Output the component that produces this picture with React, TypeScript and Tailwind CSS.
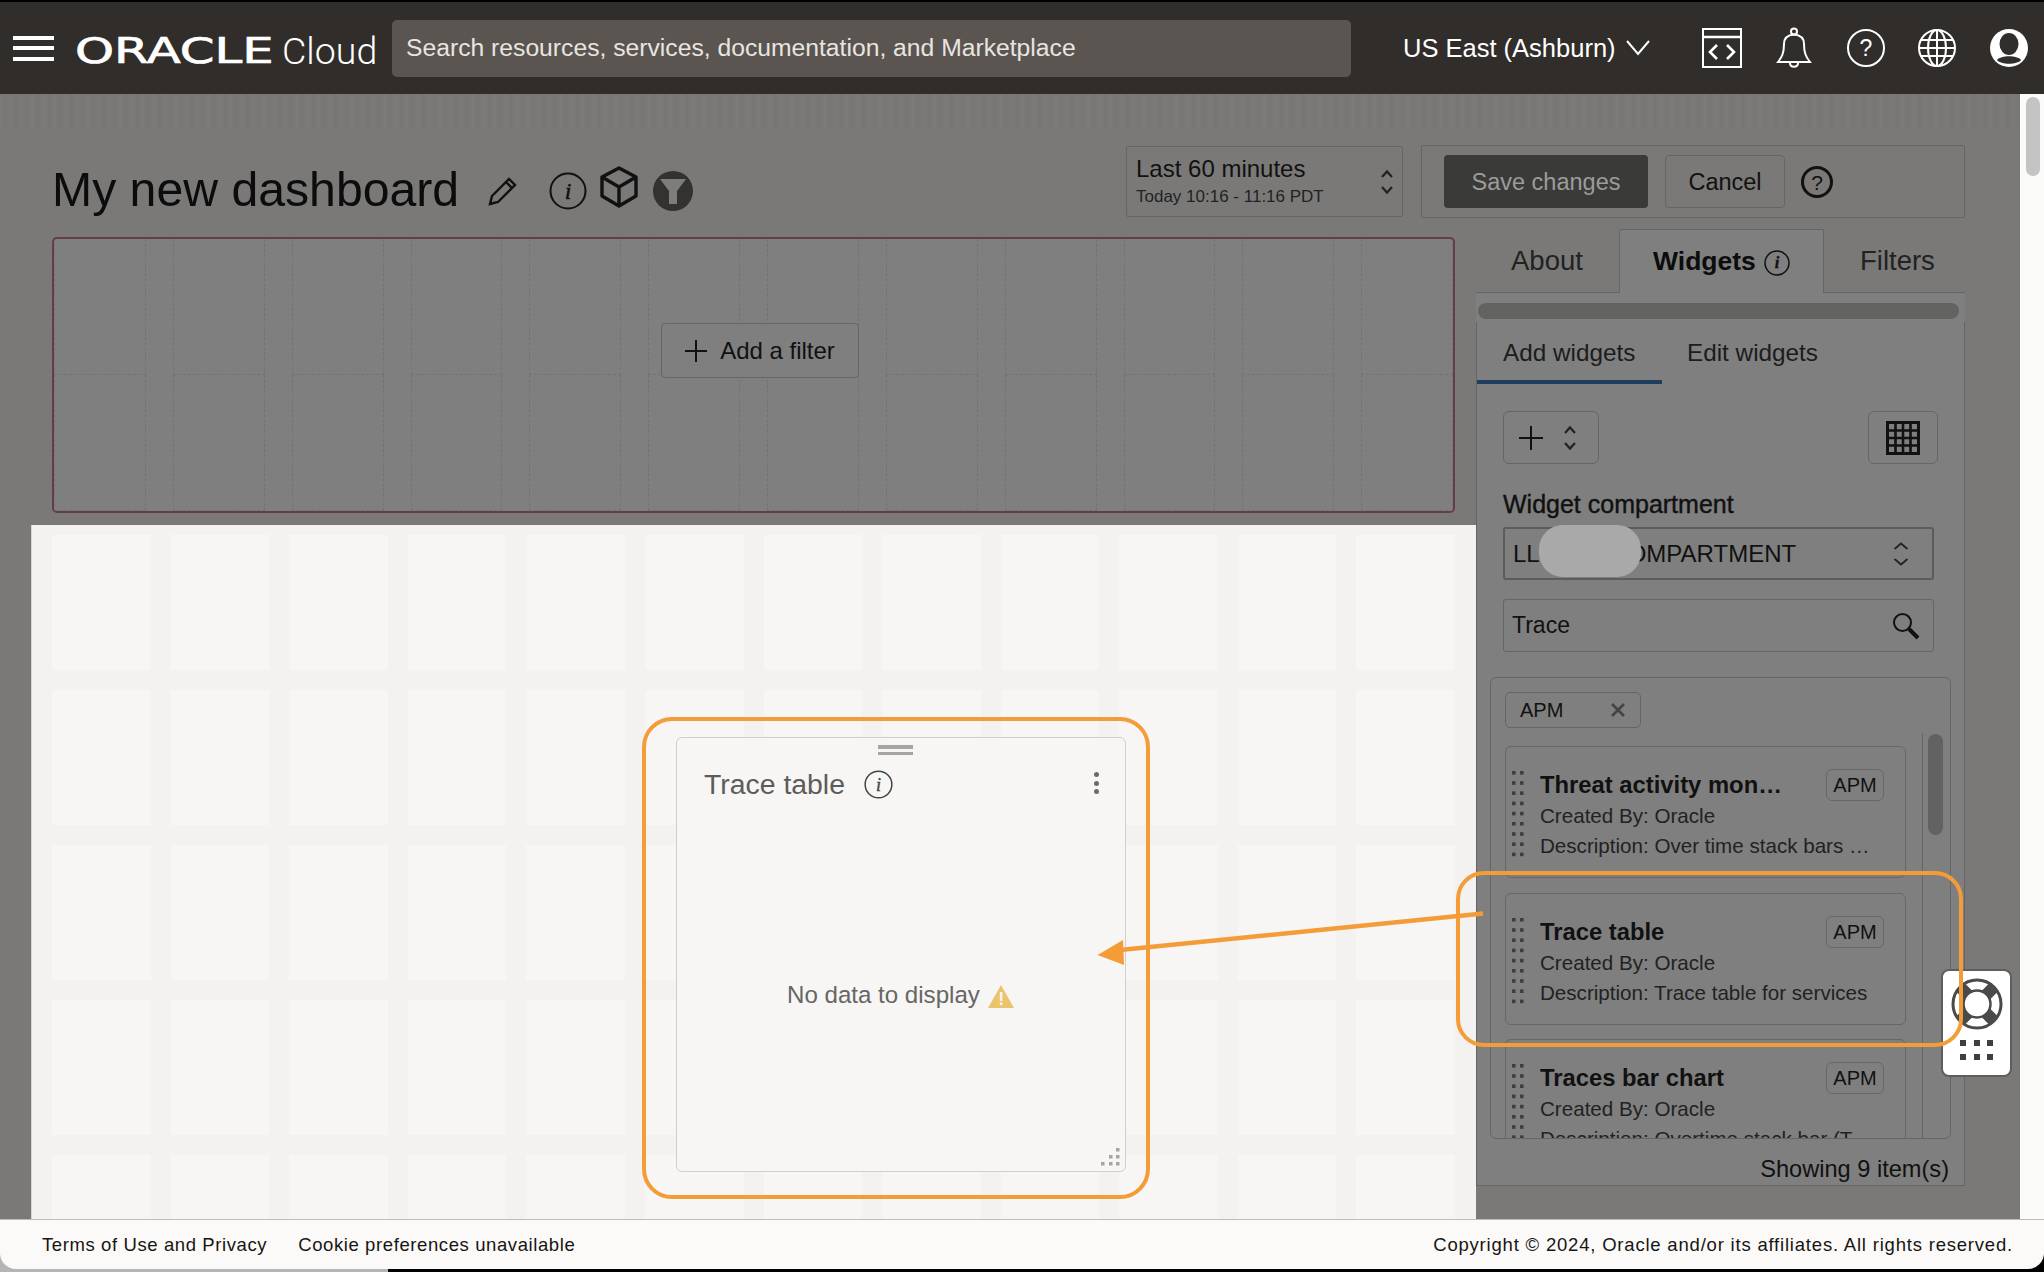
import React from "react";

const Info = ({ size = 38, color = "#111", sw = 2 }: { size?: number; color?: string; sw?: number }) => (
  <svg width={size} height={size} viewBox="0 0 38 38" className="shrink-0">
    <circle cx="19" cy="19" r="17.5" fill="none" stroke={color} strokeWidth={sw * (38 / size)} />
    <text x="19" y="27" textAnchor="middle" fontFamily="Liberation Serif, serif" fontStyle="italic" fontSize="24" fill={color} stroke={color} strokeWidth="0.5">i</text>
  </svg>
);

const Chevrons = ({ w = 14, h = 28, color = "#222", sw = 2.2 }: { w?: number; h?: number; color?: string; sw?: number }) => (
  <svg width={w} height={h} viewBox="0 0 14 28" preserveAspectRatio="none" className="shrink-0">
    <path d="M2 9 L7 3.5 L12 9 M2 19 L7 24.5 L12 19" fill="none" stroke={color} strokeWidth={sw} />
  </svg>
);

const Grip = () => (
  <svg width="12" height="86" viewBox="0 0 12 86" className="shrink-0">
    {[0, 1, 2, 3, 4, 5, 6, 7, 8].map((i) => (
      <g key={i} fill="#3f3f3f">
        <rect x="0" y={i * 10.2} width="3.6" height="3.6" />
        <rect x="8" y={i * 10.2} width="3.6" height="3.6" />
      </g>
    ))}
  </svg>
);

const WidgetCard = ({ title, desc }: { title: string; desc: string }) => (
  <div className="relative flex h-[132px] w-[401px] shrink-0 rounded-[6px] border border-[#676766] pl-[6px] pr-[21px] pt-[24px]">
    <Grip />
    <div className="ml-[16px] min-w-0 flex-1">
      <div className="flex items-start justify-between">
        <div className="whitespace-nowrap text-[23.8px] font-bold leading-[27px] text-[#111]">{title}</div>
        <div className="mt-[-2px] flex h-[32px] w-[58px] items-center justify-center rounded-[6px] border border-[#676766] text-[20px] text-[#111]">APM</div>
      </div>
      <div className="mt-[0px] whitespace-nowrap text-[20.6px] leading-[30px] text-[#222]">Created By: Oracle</div>
      <div className="whitespace-nowrap text-[20.6px] leading-[30px] text-[#222]">{desc}</div>
    </div>
  </div>
);

export default function App() {
  const cells = Array.from({ length: 60 });
  const filterCells = Array.from({ length: 24 });
  return (
    <div className="relative flex h-[1272px] w-[2044px] flex-col overflow-hidden bg-black font-['Liberation_Sans',Arial,sans-serif]">
      {/* Header */}
      <header className="flex h-[94px] shrink-0 items-center border-t-2 border-black bg-[#312d2a] text-white">
        <div className="ml-[13px] flex w-[41px] flex-col gap-[6.5px]">
          <div className="h-[4px] bg-white" />
          <div className="h-[4px] bg-white" />
          <div className="h-[4px] bg-white" />
        </div>
        <div className="ml-[21px] mt-[8px] w-[207px] shrink-0">
          <span className="inline-block origin-left scale-x-[1.42] font-['DejaVu_Sans',sans-serif] text-[35px] leading-none [-webkit-text-stroke:0.7px_#fff]">ORACLE</span>
        </div>
        <div className="mt-[7px] w-[110px] shrink-0 font-['Roboto',sans-serif] text-[37.5px] font-light leading-none">Cloud</div>
        <div className="flex h-[57px] w-[959px] shrink-0 items-center rounded-[5px] bg-[#5a5550] pl-[14px] text-[24.7px] text-[#e8e5e1]">
          Search resources, services, documentation, and Marketplace
        </div>
        <div className="ml-[52px] whitespace-nowrap text-[25.5px]">US East (Ashburn)</div>
        <svg width="24" height="16" viewBox="0 0 24 16" className="ml-[10px] shrink-0">
          <path d="M1 1 L12 14 L23 1" fill="none" stroke="#fff" strokeWidth="2" />
        </svg>
        <svg width="40" height="40" viewBox="0 0 40 40" className="ml-[52px] shrink-0">
          <rect x="1" y="1" width="38" height="38" fill="none" stroke="#fff" strokeWidth="2" />
          <path d="M1 9 H39" stroke="#fff" strokeWidth="2.4" />
          <path d="M15 17 L8 24 L15 31 M25 17 L32 24 L25 31" fill="none" stroke="#fff" strokeWidth="2.6" />
        </svg>
        <svg width="36" height="42" viewBox="0 0 36 42" className="ml-[34px] shrink-0">
          <circle cx="18" cy="4.5" r="3" fill="none" stroke="#fff" strokeWidth="2" />
          <path d="M2 35 C6 30 8 26 8 17 C8 11 12 8 18 7.5 C24 8 28 11 28 17 C28 26 30 30 34 35 Z" fill="none" stroke="#fff" strokeWidth="2" />
          <path d="M14 36 C14 41 22 41 22 36" fill="none" stroke="#fff" strokeWidth="2" />
        </svg>
        <svg width="40" height="40" viewBox="0 0 40 40" className="ml-[34px] shrink-0">
          <circle cx="20" cy="20" r="18" fill="none" stroke="#fff" strokeWidth="2" />
          <text x="20" y="28" textAnchor="middle" fontFamily="Liberation Sans, sans-serif" fontSize="23" fill="#fff">?</text>
        </svg>
        <svg width="40" height="40" viewBox="0 0 40 40" className="ml-[31px] shrink-0">
          <circle cx="20" cy="20" r="18" fill="none" stroke="#fff" strokeWidth="2" />
          <ellipse cx="20" cy="20" rx="9" ry="18" fill="none" stroke="#fff" strokeWidth="2" />
          <path d="M20 2 V38 M4 12 H36 M2 20 H38 M4 28 H36" stroke="#fff" strokeWidth="2" />
        </svg>
        <svg width="40" height="40" viewBox="0 0 40 40" className="ml-[32px] shrink-0">
          <circle cx="20" cy="20" r="19" fill="#fff" />
          <ellipse cx="20" cy="16" rx="9.5" ry="11" fill="#312d2a" />
          <path d="M8 32 C12 27 28 27 32 32 C28 37 12 37 8 32 Z" fill="#312d2a" />
        </svg>
      </header>

      {/* Page */}
      <div className="flex min-h-0 flex-1">
        <main className="flex w-[2020px] flex-col bg-[#7a7978]">
          {/* Top row */}
          <div className="flex h-[135px] shrink-0 items-start bg-[repeating-linear-gradient(90deg,#7c7b79_0px,#777674_5px,#7c7b79_11px)] bg-[length:100%_34px] bg-no-repeat">
            <div className="ml-[52px] mt-[65px] flex items-center">
              <h1 className="mb-[3px] whitespace-nowrap text-[48.2px] font-normal leading-[60px] text-[#0c0c0c]">My new dashboard</h1>
              <svg width="30" height="30" viewBox="0 0 30 30" className="ml-[29px] shrink-0">
                <path d="M2 28 L4 20 L21 3 L27 9 L10 26 Z M18 6 L24 12" fill="none" stroke="#111" strokeWidth="2.4" />
              </svg>
              <div className="ml-[31px]"><Info /></div>
              <svg width="38" height="42" viewBox="0 0 38 42" className="ml-[13px] mt-[-8px] shrink-0">
                <path d="M19 2 L36 11 V30 L19 40 L2 30 V11 Z M2 11 L19 21 L36 11 M19 21 V40" fill="none" stroke="#111" strokeWidth="3.4" strokeLinejoin="round" />
              </svg>
              <svg width="40" height="40" viewBox="0 0 40 40" className="ml-[15px] shrink-0">
                <circle cx="20" cy="20" r="20" fill="#333230" />
                <path d="M7 8 H33 L24 20 V33 H16 V20 Z" fill="#7d7d7b" />
              </svg>
            </div>
            <div className="ml-auto mt-[52px] flex h-[71px] w-[277px] items-center justify-between rounded-[2px] border border-[#656563] pl-[9px] pr-[8px]">
              <div>
                <div className="text-[24px] leading-[30px] text-[#111]">Last 60 minutes</div>
                <div className="mt-[1px] text-[17px] leading-[24px] text-[#222]">Today 10:16 - 11:16 PDT</div>
              </div>
              <Chevrons />
            </div>
            <div className="ml-[18px] mr-[55px] mt-[51px] flex h-[73px] w-[544px] items-center rounded-[2px] border border-[#656563] pl-[22px]">
              <div className="flex h-[53px] w-[204px] items-center justify-center rounded-[4px] bg-[#3a3a38] pt-[3px] text-[23.5px] text-[#9c9c9a]">Save changes</div>
              <div className="ml-[17px] flex h-[53px] w-[120px] items-center justify-center rounded-[4px] border border-[#656563] pt-[3px] text-[23.5px] text-[#111]">Cancel</div>
              <svg width="32" height="32" viewBox="0 0 32 32" className="ml-[16px] shrink-0">
                <circle cx="16" cy="16" r="14.5" fill="none" stroke="#111" strokeWidth="3" />
                <text x="16" y="23.5" textAnchor="middle" fontFamily="Liberation Sans, sans-serif" fontSize="21" fill="#111">?</text>
              </svg>
            </div>
          </div>

          {/* Body */}
          <div className="flex min-h-0 flex-1">
            {/* Left column */}
            <div className="flex w-[1476px] shrink-0 flex-col">
              <div className="relative ml-[52px] mt-[8px] grid h-[276px] w-[1403px] shrink-0 grid-cols-12 grid-rows-2 gap-x-[27px] overflow-hidden rounded-[5px] border-2 border-[#643d4c] bg-[#7f7f7f]">
                {filterCells.map((_, i) => (
                  <div key={i} className="border-x border-b border-dashed border-[#737371]" />
                ))}
                <div className="absolute left-[607px] top-[84px] flex h-[55px] w-[198px] items-center justify-center gap-[13px] rounded-[4px] border border-[#656563] bg-[#7f7f7f] text-[24px] text-[#111]">
                  <svg width="22" height="22" viewBox="0 0 22 22"><path d="M11 0 V22 M0 11 H22" stroke="#111" strokeWidth="2" /></svg>
                  Add a filter
                </div>
              </div>
              <div className="relative ml-[31px] mt-[12px] min-h-0 flex-1 overflow-hidden border-l border-[#d5d5d5] bg-[#f3f2f0]">
                <div className="grid grid-cols-12 gap-x-[20px] gap-y-[20px] pl-[20px] pr-[21px] pt-[10px] [grid-auto-rows:135px]">
                  {cells.map((_, i) => (
                    <div key={i} className="bg-[#f7f6f4]" />
                  ))}
                </div>
                {/* Placed widget on the free canvas */}
                <div className="absolute left-[644px] top-[212px] h-[435px] w-[450px] rounded-[6px] border border-[#cfcfcd] bg-[#f7f6f4]">
                  <div className="ml-[201px] mt-[7px] flex w-[35px] flex-col gap-[3px]">
                    <div className="h-[3.5px] bg-[#a5a5a3]" />
                    <div className="h-[3.5px] bg-[#a5a5a3]" />
                  </div>
                  <div className="ml-[27px] mt-[13px] flex items-center">
                    <span className="text-[28.4px] leading-[32px] text-[#5d5c5a]">Trace table</span>
                    <div className="ml-[19px]"><Info size={29} color="#444" sw={1.5} /></div>
                    <div className="ml-auto mr-[26px] mt-[-2px] flex flex-col gap-[3.5px]">
                      <div className="h-[5px] w-[5px] rounded-full bg-[#6b6b69]" />
                      <div className="h-[5px] w-[5px] rounded-full bg-[#6b6b69]" />
                      <div className="h-[5px] w-[5px] rounded-full bg-[#6b6b69]" />
                    </div>
                  </div>
                  <div className="mt-[181px] flex items-center pl-[110px]">
                    <span className="whitespace-nowrap text-[24.1px] leading-[28px] text-[#666664]">No data to display</span>
                    <svg width="26" height="23" viewBox="0 0 26 23" className="ml-[8px] mt-[2px] shrink-0">
                      <path d="M13 0 L26 23 H0 Z" fill="#ecc36d" />
                      <rect x="11.8" y="7" width="2.6" height="9" fill="#f7f6f4" />
                      <rect x="11.8" y="17.5" width="2.6" height="2.6" fill="#f7f6f4" />
                    </svg>
                  </div>
                  <svg width="20" height="20" viewBox="0 0 20 20" className="absolute bottom-[3px] right-[4px]">
                    <g fill="#a5a5a3">
                      <rect x="15" y="0" width="3.5" height="3.5" />
                      <rect x="8" y="7" width="3.5" height="3.5" />
                      <rect x="15" y="7" width="3.5" height="3.5" />
                      <rect x="0" y="14" width="3.5" height="3.5" />
                      <rect x="8" y="14" width="3.5" height="3.5" />
                      <rect x="15" y="14" width="3.5" height="3.5" />
                    </g>
                  </svg>
                </div>
              </div>
            </div>

            {/* Right column */}
            <div className="flex w-[489px] shrink-0 flex-col">
              <div className="flex h-[64px] shrink-0 border-b border-[#656563] text-[27.5px] text-[#222]">
                <div className="flex w-[143px] items-center pl-[35px]">About</div>
                <div className="mb-[-1px] flex w-[205px] items-center rounded-t-[2px] border-x border-t border-[#656563] bg-[#7f7f7f] pl-[33px] text-[26.5px] font-bold text-[#0c0c0c]">
                  Widgets
                  <span className="ml-[8px] mt-[3px]"><Info size={26} color="#111" sw={1.5} /></span>
                </div>
                <div className="flex flex-1 items-center pl-[36px]">Filters</div>
              </div>
              <div className="flex h-[29px] shrink-0 bg-[#7f7f7f] px-[2px] pt-[10px]">
                <div className="h-[16px] w-[481px] rounded-full bg-[#636362]" />
              </div>
              <div className="flex h-[864px] shrink-0 flex-col border-x border-b border-[#656563] bg-[#7f7f7f]">
                <div className="flex h-[62px] shrink-0 text-[24.3px] text-[#1c1c1c]">
                  <div className="flex w-[185px] items-center border-b-4 border-[#1f3d5c] pl-[26px] pt-[5px]">Add widgets</div>
                  <div className="flex items-center pl-[25px] pt-[1px]">Edit widgets</div>
                </div>
                <div className="mx-[26px] mt-[27px] flex shrink-0 justify-between">
                  <div className="flex h-[53px] w-[96px] items-center rounded-[6px] border border-[#656563] pl-[15px]">
                    <svg width="24" height="24" viewBox="0 0 24 24"><path d="M12 0 V24 M0 12 H24" stroke="#111" strokeWidth="2" /></svg>
                    <span className="ml-[20px] flex"><Chevrons /></span>
                  </div>
                  <div className="flex h-[53px] w-[70px] items-center justify-center rounded-[6px] border border-[#656563]">
                    <svg width="34" height="34" viewBox="0 0 34 34">
                      <rect x="1.5" y="1.5" width="31" height="31" fill="none" stroke="#111" strokeWidth="3" />
                      <path d="M1 9.5 H33 M1 17 H33 M1 24.5 H33 M9.5 1 V33 M17 1 V33 M24.5 1 V33" stroke="#111" strokeWidth="2.6" />
                    </svg>
                  </div>
                </div>
                <div className="mx-[26px] mt-[26px] text-[25px] font-medium leading-[28px] text-[#111] [-webkit-text-stroke:0.4px_#111]">Widget compartment</div>
                <div className="relative mx-[26px] mt-[9px] flex h-[53px] w-[431px] shrink-0 items-center justify-between rounded-[3px] border-2 border-[#5c5c5b] pl-[8px] pr-[22px] pt-[1px] text-[24px] text-[#111]">
                  <span>LLSOMECOMPARTMENT</span>
                  <Chevrons w={18} h={28} sw={1.8} />
                  <div className="absolute left-[34px] top-[-4px] h-[52px] w-[102px] rounded-[24px] bg-[#a9a9a9]" />
                </div>
                <div className="mx-[26px] mt-[19px] flex h-[53px] w-[431px] shrink-0 items-center justify-between rounded-[3px] border border-[#656563] pl-[8px] pr-[13px] text-[23px] text-[#111]">
                  <span>Trace</span>
                  <svg width="28" height="28" viewBox="0 0 28 28">
                    <circle cx="10.5" cy="10.5" r="8.5" fill="none" stroke="#111" strokeWidth="2" />
                    <path d="M17 17 L26 26" stroke="#111" strokeWidth="4" />
                  </svg>
                </div>
                {/* Result list */}
                <div className="mx-[13px] mt-[25px] flex h-[462px] shrink-0 flex-col overflow-hidden rounded-[6px] border border-[#656563]">
                  <div className="ml-[14px] mt-[14px] flex h-[36px] w-[136px] shrink-0 items-center justify-between rounded-[5px] border border-[#656563] pl-[14px] pr-[15px] text-[20px] text-[#111]">
                    APM
                    <svg width="14" height="14" viewBox="0 0 14 14"><path d="M1 1 L13 13 M13 1 L1 13" stroke="#444" strokeWidth="2.6" /></svg>
                  </div>
                  <div className="mt-[5px] flex min-h-0 flex-1">
                    <div className="flex w-[431px] shrink-0 flex-col gap-[14.5px] overflow-hidden pl-[14px] pt-[13px]">
                      <WidgetCard title="Threat activity mon…" desc="Description: Over time stack bars …" />
                      <WidgetCard title="Trace table" desc="Description: Trace table for services" />
                      <WidgetCard title="Traces bar chart" desc="Description: Overtime stack bar (T" />
                    </div>
                    <div className="flex-1 border-l border-[#656563] pl-[5px] pt-[1px]">
                      <div className="h-[101px] w-[15px] rounded-full bg-[#626261]" />
                    </div>
                  </div>
                </div>
                <div className="mr-[15px] mt-[16px] text-right text-[23.6px] leading-[28px] text-[#111]">Showing 9 item(s)</div>
              </div>
            </div>
          </div>
        </main>
        <div className="w-[24px] shrink-0 bg-[#fbfbfa] pl-[6px] pt-[3px]">
          <div className="h-[79px] w-[14px] rounded-full bg-[#c4c4c4]" />
        </div>
      </div>

      {/* Footer */}
      <div className="h-[53px] shrink-0 bg-[linear-gradient(90deg,#b5b5b5_19%,#000_19%)] pb-[3px]">
        <footer className="flex h-full items-center justify-between rounded-b-[16px] border-t border-[#bdbdbb] bg-[#fbfaf8] pl-[42px] pr-[31px] text-[18.5px] text-[#161513]">
          <div className="flex gap-[31px] tracking-[0.6px]">
            <span>Terms of Use and Privacy</span>
            <span>Cookie preferences unavailable</span>
          </div>
          <span className="tracking-[0.8px]">Copyright © 2024, Oracle and/or its affiliates. All rights reserved.</span>
        </footer>
      </div>

      {/* Help widget */}
      <div className="absolute left-[1941px] top-[969px] flex h-[108px] w-[71px] flex-col items-center rounded-[8px] border-2 border-[#5e5e5e] bg-white">
        <svg width="52" height="52" viewBox="0 0 52 52" className="mt-[7px]">
          <g transform="rotate(45 26 26)" fill="#4a4a4a">
            <rect x="20" y="3" width="12" height="46" />
            <rect x="3" y="20" width="46" height="12" />
          </g>
          <circle cx="26" cy="26" r="24" fill="none" stroke="#4a4a4a" strokeWidth="3" />
          <circle cx="26" cy="26" r="13.5" fill="#fff" stroke="#4a4a4a" strokeWidth="2.5" />
        </svg>
        <div className="mt-[10px] grid grid-cols-3 gap-x-[7.5px] gap-y-[8px]">
          {[0, 1, 2, 3, 4, 5].map((i) => (
            <div key={i} className="h-[6px] w-[6px] bg-[#3f3f3f]" />
          ))}
        </div>
      </div>

      {/* Orange annotations */}
      <div className="absolute left-[642px] top-[717px] h-[482px] w-[508px] rounded-[30px] border-[4.5px] border-[#f49c38]" />
      <div className="absolute left-[1456px] top-[871px] h-[176px] w-[507px] rounded-[28px] border-[4.5px] border-[#f49c38]" />
      <svg className="absolute left-[1090px] top-[900px]" width="400" height="70" viewBox="0 0 400 70">
        <path d="M393 13.5 L30 50" stroke="#f49c38" strokeWidth="4.5" fill="none" />
        <path d="M7.5 55 L33 40 L34 65 Z" fill="#f49c38" />
      </svg>
    </div>
  );
}
